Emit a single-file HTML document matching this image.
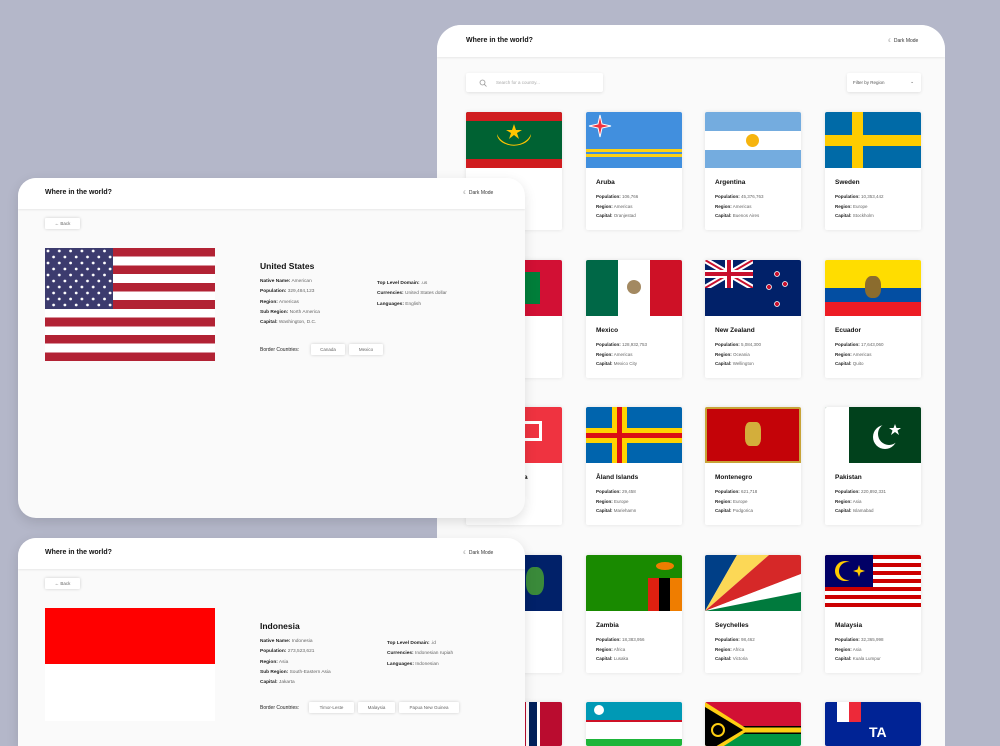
<!DOCTYPE html>
<html><head><meta charset="utf-8"><style>
*{margin:0;padding:0;box-sizing:border-box}
html{width:1000px;height:746px;overflow:hidden}
body{width:1000px;height:746px;background:#b4b7c9;position:relative;overflow:hidden;font-family:"Liberation Sans",sans-serif;color:#111}
.abs{position:absolute}
.big{position:absolute;left:437px;top:25px;width:508px;height:721px;background:#fafafa;border-radius:24px 24px 0 0;overflow:hidden}
.hdr{position:absolute;left:0;top:0;right:0;background:#fff;box-shadow:0 1px 2px rgba(0,0,0,.08)}
.t{font-weight:bold;font-size:7px;position:absolute}
.dm{font-size:5px;position:absolute;color:#333}
.card{position:absolute;width:96px;height:118px;background:#fff;box-shadow:0 0 4px rgba(0,0,0,.1);border-radius:2px;overflow:hidden}
.flag{position:absolute;left:0;top:0;width:96px;height:56px;overflow:hidden}
.nm{position:absolute;left:10px;top:67px;font-size:6.5px;font-weight:bold}
.ln{position:absolute;left:10px;font-size:4.5px;color:#666}
.ln b{color:#222}
.panel{position:absolute;left:18px;width:507px;background:#fafafa;border-radius:18px;overflow:hidden;box-shadow:0 4px 12px rgba(0,0,0,.12)}
.btn{position:absolute;background:#fff;box-shadow:0 0 3px rgba(0,0,0,.18);font-size:4.5px;color:#666;text-align:center;border-radius:1px}
.info{position:absolute;font-size:4.8px;color:#666;line-height:10.3px}
.info b{color:#222}
</style></head><body>

<div class="big">
 <div class="hdr" style="height:32px"><div class="t" style="left:29px;top:12px">Where in the world?</div><div class="dm" style="left:451px;top:13px">☾ Dark Mode</div></div>
 <div class="abs" style="left:29px;top:48px;width:137px;height:19px;background:#fff;box-shadow:0 1px 3px rgba(0,0,0,.1);border-radius:2px;font-size:4.5px;color:#aaa;padding:7px 0 0 30px">Search for a country...</div>
 <svg class="abs" style="left:42px;top:54px" width="8" height="8"><circle cx="3.5" cy="3.5" r="2.5" fill="none" stroke="#999" stroke-width=".8"/><path d="M5.3 5.3L7.5 7.5" stroke="#999" stroke-width=".8"/></svg>
 <div class="abs" style="left:410px;top:48px;width:74px;height:19px;background:#fff;box-shadow:0 1px 3px rgba(0,0,0,.1);border-radius:2px;font-size:4.5px;color:#555;padding:7px 0 0 6px">Filter by Region<span style="position:absolute;right:7px;top:6px">⌄</span></div>
</div>

<!-- Row1 -->
<div class="card" style="left:466px;top:112px"><div class="flag" style="background:#006233"><div class="abs" style="left:0;top:0;width:96px;height:9px;background:#d01c1f"></div><div class="abs" style="left:0;top:47px;width:96px;height:9px;background:#d01c1f"></div><svg class="abs" style="left:0;top:0" width="96" height="56"><path d="M31 22 A18 16 0 0 0 65 22 A16 11 0 0 1 31 22Z" fill="#ffc400"/><polygon points="48,12 50,18 56,18 51,21 53,27 48,23 43,27 45,21 40,18 46,18" fill="#ffc400"/></svg></div></div>
<div class="card" style="left:586px;top:112px"><div class="flag" style="background:#418fde"><div class="abs" style="left:0;top:37px;width:96px;height:2.5px;background:#fcd116"></div><div class="abs" style="left:0;top:42px;width:96px;height:2.5px;background:#fcd116"></div><svg class="abs" width="30" height="30" style="left:0;top:0"><polygon points="14,3 16,12 25,14 16,16 14,25 12,16 3,14 12,12" fill="#ef3340" stroke="#fff" stroke-width="1"/></svg></div><div class="nm">Aruba</div><div class="ln" style="top:82px"><b>Population:</b> 106,766</div><div class="ln" style="top:92px"><b>Region:</b> Americas</div><div class="ln" style="top:101px"><b>Capital:</b> Oranjestad</div></div>
<div class="card" style="left:705px;top:112px"><div class="flag" style="background:#74acdf"><div class="abs" style="left:0;top:19px;width:96px;height:19px;background:#fff"></div><div class="abs" style="left:41px;top:22px;width:13px;height:13px;border-radius:50%;background:#f6b40e"></div></div><div class="nm">Argentina</div><div class="ln" style="top:82px"><b>Population:</b> 45,376,763</div><div class="ln" style="top:92px"><b>Region:</b> Americas</div><div class="ln" style="top:101px"><b>Capital:</b> Buenos Aires</div></div>
<div class="card" style="left:825px;top:112px"><div class="flag" style="background:#006aa7"><div class="abs" style="left:27px;top:0;width:11px;height:56px;background:#fecc00"></div><div class="abs" style="left:0;top:23px;width:96px;height:11px;background:#fecc00"></div></div><div class="nm">Sweden</div><div class="ln" style="top:82px"><b>Population:</b> 10,353,442</div><div class="ln" style="top:92px"><b>Region:</b> Europe</div><div class="ln" style="top:101px"><b>Capital:</b> Stockholm</div></div>

<!-- Row2 -->
<div class="card" style="left:466px;top:260px"><div class="flag" style="background:#d21034"><div class="abs" style="left:22px;top:12px;width:52px;height:32px;background:#007e3a"></div></div></div>
<div class="card" style="left:586px;top:260px"><div class="flag" style="background:#fff"><div class="abs" style="left:0;top:0;width:32px;height:56px;background:#006847"></div><div class="abs" style="left:64px;top:0;width:32px;height:56px;background:#ce1126"></div><div class="abs" style="left:41px;top:20px;width:14px;height:14px;border-radius:50%;background:#8c6b3a;opacity:.8"></div></div><div class="nm">Mexico</div><div class="ln" style="top:82px"><b>Population:</b> 128,932,753</div><div class="ln" style="top:92px"><b>Region:</b> Americas</div><div class="ln" style="top:101px"><b>Capital:</b> Mexico City</div></div>
<div class="card" style="left:705px;top:260px"><div class="flag" style="background:#012169"><svg class="abs" width="48" height="28"><path d="M0 0L48 28M48 0L0 28" stroke="#fff" stroke-width="6"/><path d="M0 0L48 28M48 0L0 28" stroke="#c8102e" stroke-width="2"/><path d="M24 0V28M0 14H48" stroke="#fff" stroke-width="8"/><path d="M24 0V28M0 14H48" stroke="#c8102e" stroke-width="4"/></svg><svg class="abs" width="96" height="56"><g fill="#c8102e" stroke="#fff" stroke-width=".8"><circle cx="72" cy="14" r="2.5"/><circle cx="64" cy="27" r="2.5"/><circle cx="80" cy="24" r="2.5"/><circle cx="72" cy="44" r="2.5"/></g></svg></div><div class="nm">New Zealand</div><div class="ln" style="top:82px"><b>Population:</b> 5,084,300</div><div class="ln" style="top:92px"><b>Region:</b> Oceania</div><div class="ln" style="top:101px"><b>Capital:</b> Wellington</div></div>
<div class="card" style="left:825px;top:260px"><div class="flag" style="background:#ffdd00"><div class="abs" style="left:0;top:28px;width:96px;height:14px;background:#034ea2"></div><div class="abs" style="left:0;top:42px;width:96px;height:14px;background:#ed1c24"></div><div class="abs" style="left:40px;top:16px;width:16px;height:22px;background:#8b6c2e;border-radius:40%"></div></div><div class="nm">Ecuador</div><div class="ln" style="top:82px"><b>Population:</b> 17,643,060</div><div class="ln" style="top:92px"><b>Region:</b> Americas</div><div class="ln" style="top:101px"><b>Capital:</b> Quito</div></div>

<!-- Row3 -->
<div class="card" style="left:466px;top:407px"><div class="flag" style="background:#ef3340"><div class="abs" style="left:56px;top:14px;width:20px;height:20px;border:3px solid #fff"></div></div><div class="nm" style="left:58px">a</div></div>
<div class="card" style="left:586px;top:407px"><div class="flag" style="background:#0064ad"><div class="abs" style="left:26px;top:0;width:15px;height:56px;background:#ffd300"></div><div class="abs" style="left:0;top:21px;width:96px;height:15px;background:#ffd300"></div><div class="abs" style="left:31px;top:0;width:5px;height:56px;background:#da0e15"></div><div class="abs" style="left:0;top:26px;width:96px;height:5px;background:#da0e15"></div></div><div class="nm">Åland Islands</div><div class="ln" style="top:82px"><b>Population:</b> 29,458</div><div class="ln" style="top:92px"><b>Region:</b> Europe</div><div class="ln" style="top:101px"><b>Capital:</b> Mariehamn</div></div>
<div class="card" style="left:705px;top:407px"><div class="flag" style="background:#c8a337"><div class="abs" style="left:2px;top:2px;width:92px;height:52px;background:#c40308"></div><div class="abs" style="left:40px;top:15px;width:16px;height:24px;background:#d3ae3b;border-radius:30%"></div></div><div class="nm">Montenegro</div><div class="ln" style="top:82px"><b>Population:</b> 621,718</div><div class="ln" style="top:92px"><b>Region:</b> Europe</div><div class="ln" style="top:101px"><b>Capital:</b> Podgorica</div></div>
<div class="card" style="left:825px;top:407px"><div class="flag" style="background:#01411c"><div class="abs" style="left:0;top:0;width:24px;height:56px;background:#fff"></div><svg class="abs" width="96" height="56"><circle cx="60" cy="30" r="12" fill="#fff"/><circle cx="64" cy="27" r="11" fill="#01411c"/><polygon points="70,17 71.5,21 76,21 72.5,23.5 74,28 70,25 66,28 67.5,23.5 64,21 68.5,21" fill="#fff"/></svg></div><div class="nm">Pakistan</div><div class="ln" style="top:82px"><b>Population:</b> 220,892,331</div><div class="ln" style="top:92px"><b>Region:</b> Asia</div><div class="ln" style="top:101px"><b>Capital:</b> Islamabad</div></div>

<!-- Row4 -->
<div class="card" style="left:466px;top:555px"><div class="flag" style="background:#012169"><div class="abs" style="left:60px;top:12px;width:18px;height:28px;background:#3a8a3a;border-radius:40%"></div></div></div>
<div class="card" style="left:586px;top:555px"><div class="flag" style="background:#198a00"><div class="abs" style="left:62px;top:23px;width:11px;height:33px;background:#de2010"></div><div class="abs" style="left:73px;top:23px;width:11px;height:33px;background:#000"></div><div class="abs" style="left:84px;top:23px;width:12px;height:33px;background:#ef7d00"></div><div class="abs" style="left:70px;top:7px;width:18px;height:8px;background:#ef7d00;border-radius:50%"></div></div><div class="nm">Zambia</div><div class="ln" style="top:82px"><b>Population:</b> 18,383,956</div><div class="ln" style="top:92px"><b>Region:</b> Africa</div><div class="ln" style="top:101px"><b>Capital:</b> Lusaka</div></div>
<div class="card" style="left:705px;top:555px"><div class="flag"><svg width="96" height="56"><polygon points="0,56 0,0 32,0" fill="#003f87"/><polygon points="0,56 32,0 64,0" fill="#fcd856"/><polygon points="0,56 64,0 96,0 96,19" fill="#d62828"/><polygon points="0,56 96,19 96,37" fill="#fff"/><polygon points="0,56 96,37 96,56" fill="#007a3d"/></svg></div><div class="nm">Seychelles</div><div class="ln" style="top:82px"><b>Population:</b> 98,462</div><div class="ln" style="top:92px"><b>Region:</b> Africa</div><div class="ln" style="top:101px"><b>Capital:</b> Victoria</div></div>
<div class="card" style="left:825px;top:555px"><div class="flag" style="background:repeating-linear-gradient(#cc0001 0 4px,#fff 4px 8px)"><div class="abs" style="left:0;top:0;width:48px;height:32px;background:#010066"></div><svg class="abs" width="48" height="32"><circle cx="20" cy="16" r="10" fill="#fc0"/><circle cx="23" cy="16" r="9" fill="#010066"/><polygon points="34,10 35.5,14.5 40,16 35.5,17.5 34,22 32.5,17.5 28,16 32.5,14.5" fill="#fc0"/></svg></div><div class="nm">Malaysia</div><div class="ln" style="top:82px"><b>Population:</b> 32,365,998</div><div class="ln" style="top:92px"><b>Region:</b> Asia</div><div class="ln" style="top:101px"><b>Capital:</b> Kuala Lumpur</div></div>

<!-- Row5 -->
<div class="card" style="left:466px;top:702px;height:44px"><div class="flag" style="background:#ba0c2f"><div class="abs" style="left:60px;top:0;width:14px;height:56px;background:#fff"></div><div class="abs" style="left:63px;top:0;width:8px;height:56px;background:#00205b"></div></div></div>
<div class="card" style="left:586px;top:702px;height:44px"><div class="flag" style="background:#fff"><div class="abs" style="left:0;top:0;width:96px;height:18px;background:#0099b5"></div><div class="abs" style="left:0;top:18px;width:96px;height:2px;background:#ce1126"></div><div class="abs" style="left:0;top:37px;width:96px;height:19px;background:#1eb53a"></div><div class="abs" style="left:8px;top:3px;width:10px;height:10px;border-radius:50%;background:#fff"></div></div></div>
<div class="card" style="left:705px;top:702px;height:44px"><div class="flag"><svg width="96" height="56"><rect width="96" height="28" fill="#d21034"/><rect y="28" width="96" height="28" fill="#009543"/><rect y="24" width="96" height="8" fill="#000"/><rect y="25.5" width="96" height="5" fill="#fdce12"/><polygon points="0,0 44,28 0,56" fill="#fdce12"/><polygon points="0,5 38,28 0,51" fill="#000"/><circle cx="13" cy="28" r="6" fill="none" stroke="#fdce12" stroke-width="2"/></svg></div></div>
<div class="card" style="left:825px;top:702px;height:44px"><div class="flag" style="background:#002395"><div class="abs" style="left:12px;top:0;width:12px;height:20px;background:#fff"></div><div class="abs" style="left:24px;top:0;width:12px;height:20px;background:#ed2939"></div><div class="abs" style="left:44px;top:22px;width:20px;height:20px;color:#fff;font-size:14px;font-weight:bold">TA</div></div></div>

<!-- Panel 1 -->
<div class="panel" style="top:178px;height:340px">
 <div class="hdr" style="height:31px"><div class="t" style="left:27px;top:11px">Where in the world?</div><div class="dm" style="left:445px;top:12px">☾ Dark Mode</div></div>
 <div class="btn" style="left:27px;top:40px;width:35px;height:11px;line-height:11px">← Back</div>
 <div class="abs" style="left:27px;top:70px;width:170px;height:113px;background:repeating-linear-gradient(#b22234 0 8.7px,#fff 8.7px 17.4px)">
  <svg class="abs" style="left:0;top:0" width="68" height="61"><defs><pattern id="st" width="11.3" height="12" patternUnits="userSpaceOnUse"><circle cx="3" cy="3" r="1.4" fill="#fff"/><circle cx="8.6" cy="9" r="1.4" fill="#fff"/></pattern></defs><rect width="68" height="61" fill="#3c3b6e"/><rect width="68" height="61" fill="url(#st)"/></svg>
 </div>
 <div class="abs" style="left:242px;top:83px;font-size:8.5px;font-weight:bold">United States</div>
 <div class="info" style="left:242px;top:99px"><b>Native Name:</b> American<br><b>Population:</b> 329,484,123<br><b>Region:</b> Americas<br><b>Sub Region:</b> North America<br><b>Capital:</b> Washington, D.C.</div>
 <div class="info" style="left:359px;top:101px"><b>Top Level Domain:</b> .us<br><b>Currencies:</b> United States dollar<br><b>Languages:</b> English</div>
 <div class="abs" style="left:242px;top:169px;font-size:5px;color:#222">Border Countries:</div>
 <div class="btn" style="left:293px;top:166px;width:34px;height:11px;line-height:11px">Canada</div>
 <div class="btn" style="left:331px;top:166px;width:34px;height:11px;line-height:11px">Mexico</div>
</div>

<!-- Panel 2 -->
<div class="panel" style="top:538px;height:208px;border-radius:18px 18px 0 0">
 <div class="hdr" style="height:31px"><div class="t" style="left:27px;top:11px">Where in the world?</div><div class="dm" style="left:445px;top:12px">☾ Dark Mode</div></div>
 <div class="btn" style="left:27px;top:40px;width:35px;height:11px;line-height:11px">← Back</div>
 <div class="abs" style="left:27px;top:70px;width:170px;height:113px;background:#fff"><div style="height:56px;background:#ff0000"></div></div>
 <div class="abs" style="left:242px;top:83px;font-size:8.5px;font-weight:bold">Indonesia</div>
 <div class="info" style="left:242px;top:99px"><b>Native Name:</b> Indonesia<br><b>Population:</b> 273,523,621<br><b>Region:</b> Asia<br><b>Sub Region:</b> South-Eastern Asia<br><b>Capital:</b> Jakarta</div>
 <div class="info" style="left:369px;top:101px"><b>Top Level Domain:</b> .id<br><b>Currencies:</b> Indonesian rupiah<br><b>Languages:</b> Indonesian</div>
 <div class="abs" style="left:242px;top:167px;font-size:5px;color:#222">Border Countries:</div>
 <div class="btn" style="left:291px;top:164px;width:45px;height:11px;line-height:11px">Timor-Leste</div>
 <div class="btn" style="left:340px;top:164px;width:37px;height:11px;line-height:11px">Malaysia</div>
 <div class="btn" style="left:381px;top:164px;width:60px;height:11px;line-height:11px">Papua New Guinea</div>
</div>
</body></html>
